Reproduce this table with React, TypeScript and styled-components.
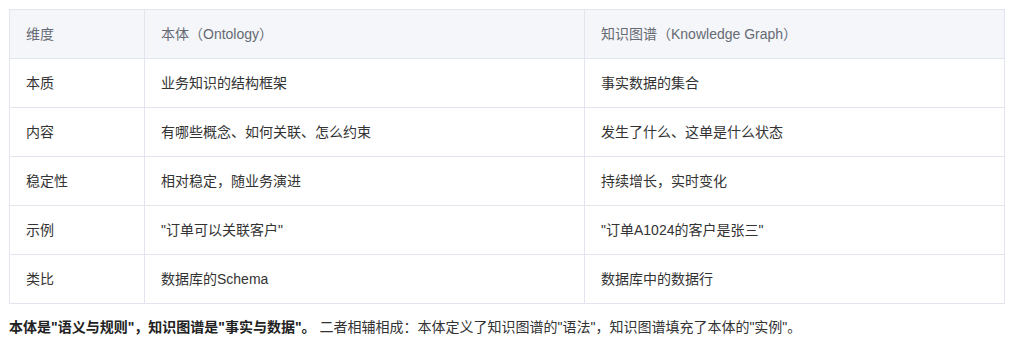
import styled, { createGlobalStyle } from "styled-components";

const GlobalStyle = createGlobalStyle`
  * {
    margin: 0;
    padding: 0;
    box-sizing: border-box;
  }

  html, body {
    background: #ffffff;
    font-family: "Liberation Sans", "Noto Sans CJK SC", sans-serif;
  }

  body {
    padding: 9px;
  }
`;

const Table = styled.table`
  width: 995px;
  border-collapse: collapse;
  font-size: 14px;
  color: #333333;
  table-layout: fixed;
`;

const HeadCell = styled.th<{ $w: number }>`
  width: ${(p) => p.$w}px;
  background: #f5f6fa;
  color: #666a73;
  font-weight: 400;
  text-align: left;
  padding: 14px 16px;
  line-height: 20px;
  border: 1px solid #e2e4ee;
`;

const Cell = styled.td`
  padding: 14px 16px;
  line-height: 20px;
  border: 1px solid #e2e4ee;
  color: #333333;
`;

const Summary = styled.p`
  margin-top: 12px;
  font-size: 14px;
  line-height: 22px;
  color: #333333;

  strong {
    color: #222222;
    font-weight: 700;
  }
`;

const rows: [string, string, string][] = [
  ["本质", "业务知识的结构框架", "事实数据的集合"],
  ["内容", "有哪些概念、如何关联、怎么约束", "发生了什么、这单是什么状态"],
  ["稳定性", "相对稳定，随业务演进", "持续增长，实时变化"],
  ["示例", "\"订单可以关联客户\"", "\"订单A1024的客户是张三\""],
  ["类比", "数据库的Schema", "数据库中的数据行"],
];

export default function App() {
  return (
    <>
      <GlobalStyle />
      <Table>
        <thead>
          <tr>
            <HeadCell $w={135}>维度</HeadCell>
            <HeadCell $w={440}>本体（Ontology）</HeadCell>
            <HeadCell $w={420}>知识图谱（Knowledge Graph）</HeadCell>
          </tr>
        </thead>
        <tbody>
          {rows.map((r) => (
            <tr key={r[0]}>
              <Cell>{r[0]}</Cell>
              <Cell>{r[1]}</Cell>
              <Cell>{r[2]}</Cell>
            </tr>
          ))}
        </tbody>
      </Table>
      <Summary>
        <strong>本体是"语义与规则"，知识图谱是"事实与数据"。</strong> 二者相辅相成：本体定义了知识图谱的"语法"，知识图谱填充了本体的"实例"。
      </Summary>
    </>
  );
}
